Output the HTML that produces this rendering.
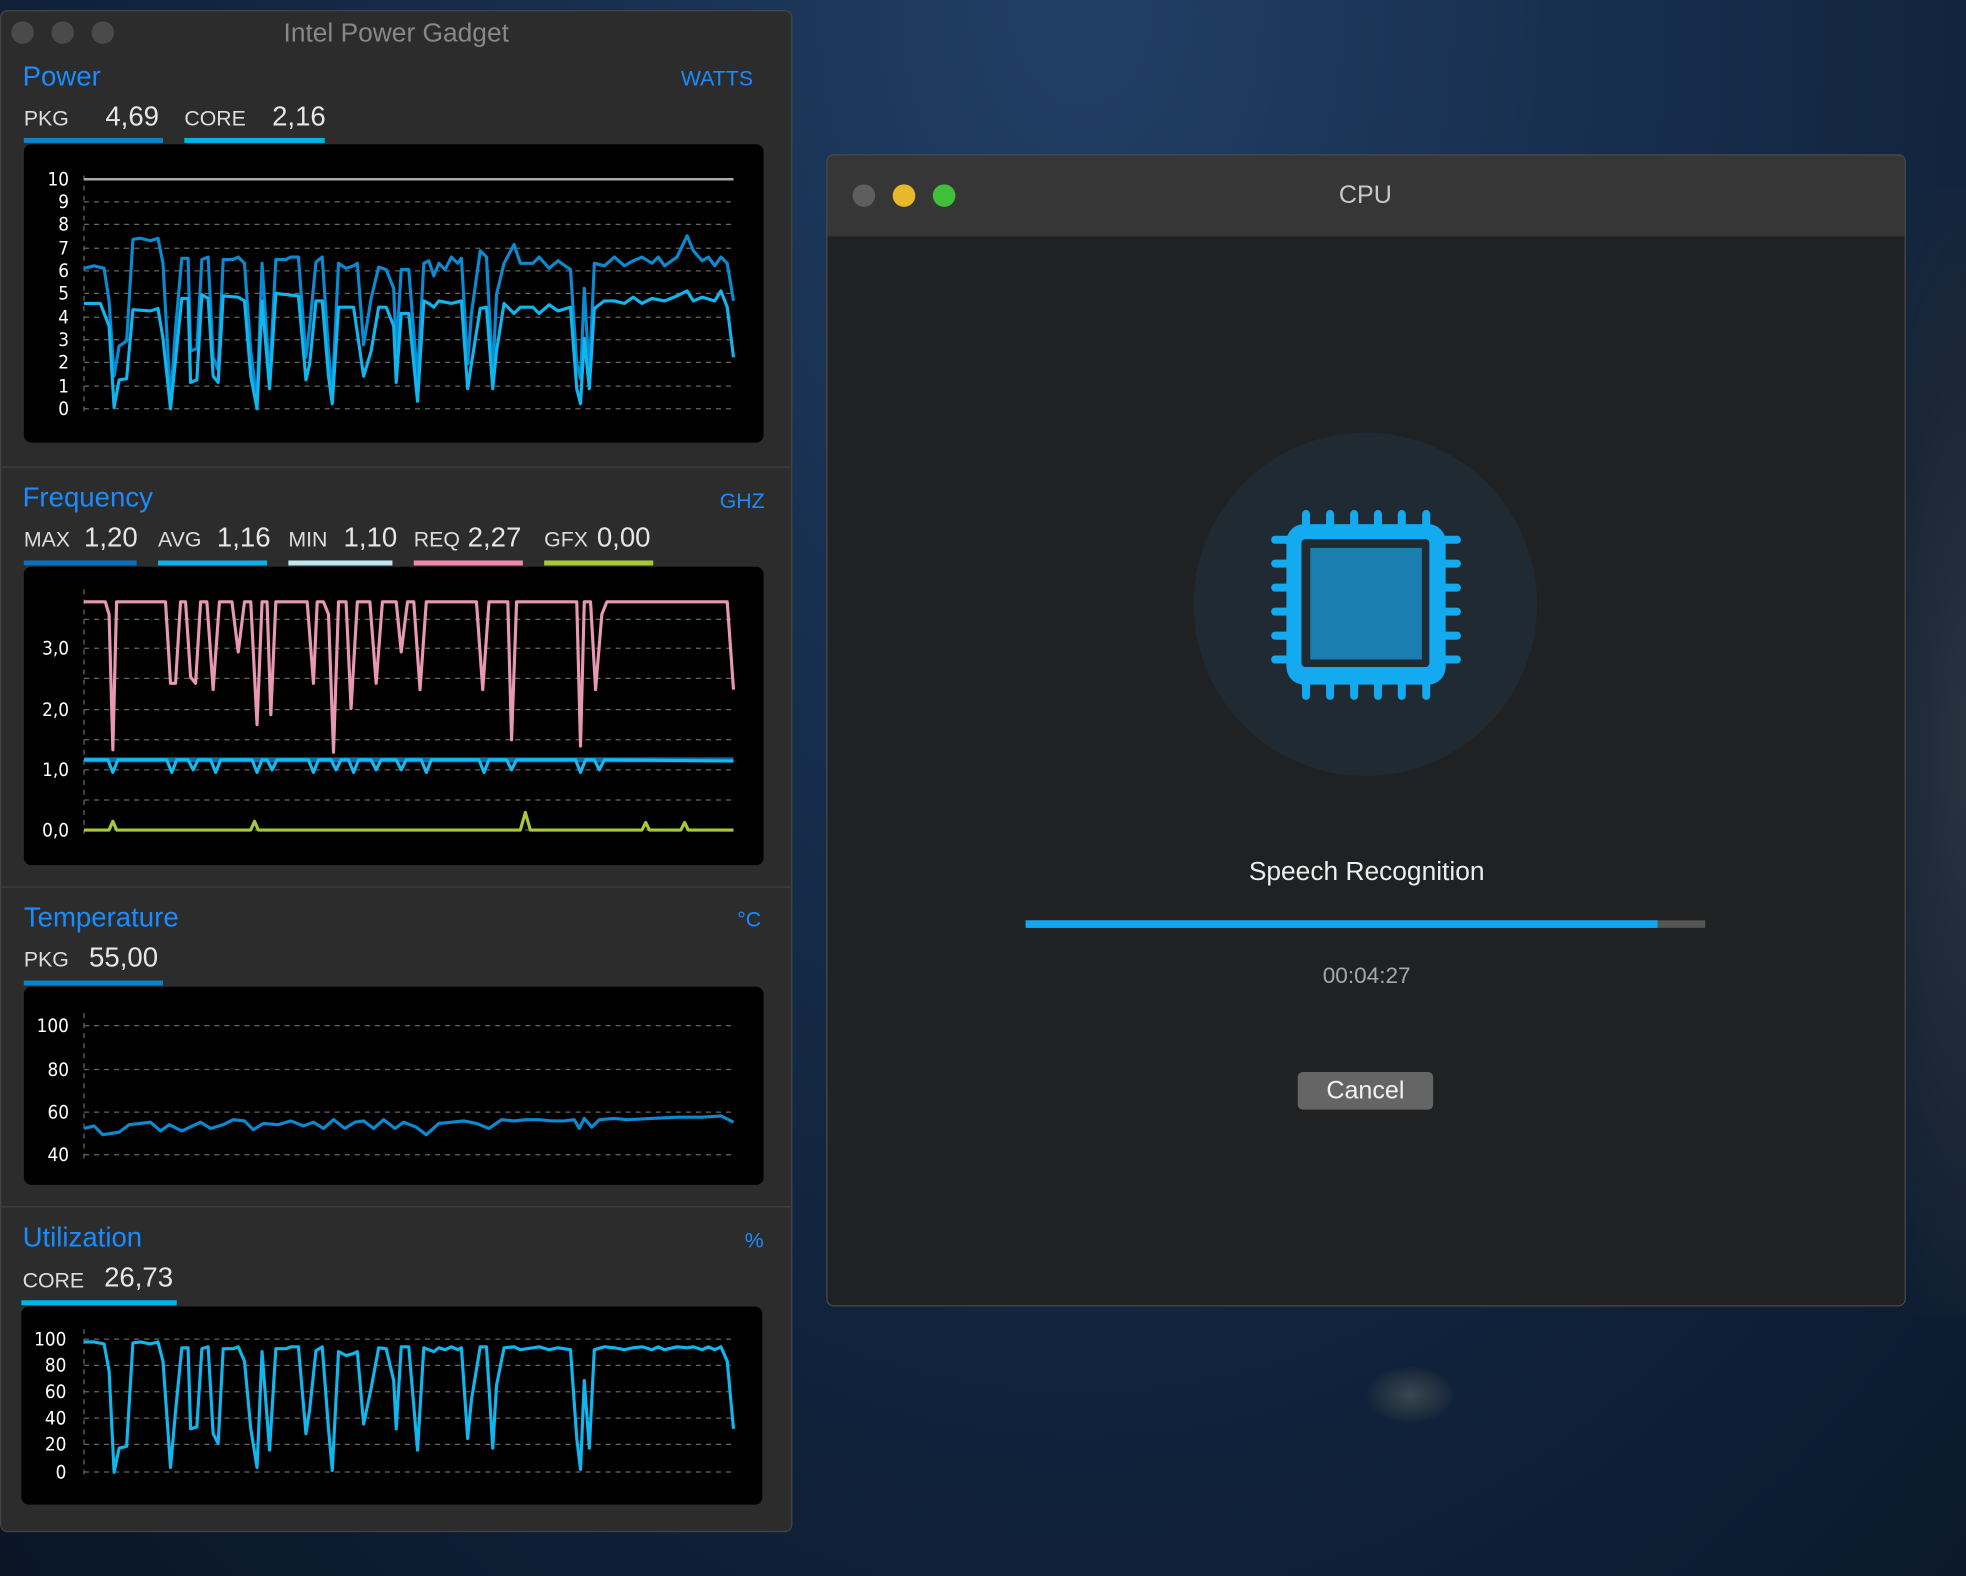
<!DOCTYPE html>
<html><head><meta charset="utf-8"><style>
html,body{margin:0;padding:0;width:1966px;height:1576px;overflow:hidden;background:#0c1a2c}
#s{position:absolute;left:0;top:0;width:1568px;height:1257px;transform:scale(1.25383);transform-origin:0 0;font-family:"Liberation Sans",sans-serif;
background:radial-gradient(ellipse at 55% 0%,#213f66 0%,#172e4d 35%,#0f2038 70%,#0a1626 100%)}
.a{position:absolute}
.win{position:absolute;left:0;top:8px;width:632px;height:1214px;background:#2c2c2c;border-radius:6px;border:1px solid #444;box-sizing:border-box}
.h{color:#1a8cff;font-size:22px}
.u{color:#1a8cff;font-size:17px}
.l{color:#ddd;font-size:17px}
.v{color:#e6e6e6;font-size:22px}
.bar{position:absolute;height:4px}
.box{position:absolute;background:#000;border-radius:6px}
.sep{position:absolute;left:0;width:632px;height:1px;background:#3e3e3e}
</style></head><body><div id="s">
<div class="a" style="left:1480px;top:150px;width:88px;height:900px;background:radial-gradient(ellipse at 100% 50%,#27333f 0%,#1a2636 50%,transparent 80%)"></div>
<div class="a" style="left:1090px;top:1090px;width:70px;height:45px;border-radius:50%;background:radial-gradient(#3b4650,#1a2a3c 60%,transparent 72%)"></div>

<div class="win">
 <div class="a" style="left:8px;top:8px;width:18px;height:18px;border-radius:50%;background:#4a4a4a"></div>
 <div class="a" style="left:40px;top:8px;width:18px;height:18px;border-radius:50%;background:#4a4a4a"></div>
 <div class="a" style="left:72px;top:8px;width:18px;height:18px;border-radius:50%;background:#4a4a4a"></div>
 <div class="a" style="left:0;width:630px;top:6px;text-align:center;color:#888;font-size:21px">Intel Power Gadget</div>
</div>
<div class="sep" style="top:372px"></div><div class="sep" style="top:707px"></div><div class="sep" style="top:962px"></div>

<div class="a h" style="left:18px;top:48px">Power</div>
<div class="a u" style="left:543px;top:53px">WATTS</div>
<div class="a l" style="left:19px;top:85px">PKG</div><div class="a v" style="left:84px;top:80px">4,69</div>
<div class="a l" style="left:147px;top:85px">CORE</div><div class="a v" style="left:217px;top:80px">2,16</div>
<div class="bar" style="left:19px;top:110px;width:111px;background:#0a84c8"></div>
<div class="bar" style="left:147px;top:110px;width:112px;background:#00b4e6"></div>
<div class="box" style="left:19px;top:115px;width:590px;height:238px"></div>

<div class="a h" style="left:18px;top:384px">Frequency</div>
<div class="a u" style="left:574px;top:390px">GHZ</div>
<div class="a l" style="left:19px;top:421px">MAX</div><div class="a v" style="left:67px;top:416px">1,20</div>
<div class="a l" style="left:126px;top:421px">AVG</div><div class="a v" style="left:173px;top:416px">1,16</div>
<div class="a l" style="left:230px;top:421px">MIN</div><div class="a v" style="left:274px;top:416px">1,10</div>
<div class="a l" style="left:330px;top:421px">REQ</div><div class="a v" style="left:373px;top:416px">2,27</div>
<div class="a l" style="left:434px;top:421px">GFX</div><div class="a v" style="left:476px;top:416px">0,00</div>
<div class="bar" style="left:19px;top:447px;width:90px;background:#0a6fc0"></div>
<div class="bar" style="left:126px;top:447px;width:87px;background:#12b0e8"></div>
<div class="bar" style="left:230px;top:447px;width:83px;background:#c0e6f2"></div>
<div class="bar" style="left:330px;top:447px;width:87px;background:#f08aa8"></div>
<div class="bar" style="left:434px;top:447px;width:87px;background:#a8c83a"></div>
<div class="box" style="left:19px;top:452px;width:590px;height:238px"></div>

<div class="a h" style="left:19px;top:719px">Temperature</div>
<div class="a u" style="left:588px;top:724px">°C</div>
<div class="a l" style="left:19px;top:756px">PKG</div><div class="a v" style="left:71px;top:751px">55,00</div>
<div class="bar" style="left:19px;top:782px;width:111px;background:#0a84c8"></div>
<div class="box" style="left:19px;top:787px;width:590px;height:158px"></div>

<div class="a h" style="left:18px;top:974px">Utilization</div>
<div class="a u" style="left:594px;top:980px">%</div>
<div class="a l" style="left:18px;top:1012px">CORE</div><div class="a v" style="left:83px;top:1006px">26,73</div>
<div class="bar" style="left:17px;top:1037px;width:124px;background:#00b4e6"></div>
<div class="box" style="left:17px;top:1042px;width:591px;height:158px"></div>

<svg class="a" style="left:0;top:0" width="632" height="1257" font-family="DejaVu Sans Condensed,DejaVu Sans,sans-serif" font-size="15" fill="#fff">
<g stroke="#666" stroke-dasharray="4 4" stroke-width="1">
<path d="M67 161H585M67 179H585M67 198H585M67 216H585M67 234H585M67 253H585M67 271H585M67 289H585M67 308H585M67 326H585M67 140V330"/>
<path d="M67 494H585M67 517H585M67 541H585M67 566H585M67 590H585M67 614H585M67 638H585M67 662H585M67 470V665"/>
<path d="M67 818H585M67 853H585M67 887H585M67 921H585M67 808V925"/>
<path d="M67 1068H585M67 1089H585M67 1110H585M67 1131H585M67 1152H585M67 1174H585M67 1060V1178"/>
</g>
<path d="M67 143H585" stroke="#aaa" stroke-width="2"/>
<g text-anchor="end">
<text x="55" y="148">10</text><text x="55" y="166">9</text><text x="55" y="184">8</text><text x="55" y="203">7</text><text x="55" y="221">6</text><text x="55" y="239">5</text><text x="55" y="258">4</text><text x="55" y="276">3</text><text x="55" y="294">2</text><text x="55" y="313">1</text><text x="55" y="331">0</text>
<text x="55" y="522">3,0</text><text x="55" y="571">2,0</text><text x="55" y="619">1,0</text><text x="55" y="667">0,0</text>
<text x="55" y="823">100</text><text x="55" y="858">80</text><text x="55" y="892">60</text><text x="55" y="926">40</text>
<text x="53" y="1073">100</text><text x="53" y="1094">80</text><text x="53" y="1115">60</text><text x="53" y="1136">40</text><text x="53" y="1157">20</text><text x="53" y="1179">0</text>
</g>
<g fill="none" stroke-width="2.5" stroke-linejoin="round">
<polyline stroke="#0a8ad0" points="67,214 75,212 83,214 87,240 91,300 95,276 101,272 106,191 112,190 120,192 126,190 130,210 136,320 140,262 145,206 150,206 152,280 157,278 161,207 166,205 170,285 174,295 178,207 186,207 190,205 195,210 200,280 205,320 209,210 215,302 220,207 228,207 232,205 238,205 244,285 247,260 252,209 257,205 262,280 265,313 270,210 276,214 282,212 285,210 290,275 296,238 302,213 308,215 314,230 316,280 320,215 326,215 333,302 338,210 342,208 346,220 350,210 355,215 360,205 365,210 368,206 373,290 376,250 383,200 388,205 393,300 396,235 402,210 410,195 415,210 425,210 430,205 438,214 445,208 455,215 460,290 463,302 466,230 470,300 474,210 482,212 490,205 498,212 505,208 512,205 520,210 525,205 530,212 540,205 548,188 553,200 560,208 565,205 570,212 575,205 580,210 585,240"/>
<polyline stroke="#10b6ee" points="67,242 80,242 87,260 91,325 95,303 101,302 106,247 120,248 126,246 130,270 136,326 145,238 150,238 152,305 157,303 161,235 166,238 170,300 174,305 178,236 190,237 195,240 200,300 205,326 209,240 215,310 220,234 238,236 244,303 247,290 252,240 257,240 262,300 265,322 270,245 282,245 290,300 296,280 302,245 308,245 314,260 316,305 320,250 326,250 333,320 338,240 342,242 346,245 350,240 360,242 368,240 373,310 376,290 383,246 388,245 393,310 396,280 402,242 410,250 415,245 425,245 430,250 438,243 445,248 455,245 460,310 463,322 466,270 470,310 474,246 482,240 490,240 498,242 505,237 512,242 520,238 530,240 540,236 548,232 553,240 560,237 570,240 575,232 580,245 585,285"/>
<polyline stroke="#e898b4" points="67,480 84,480 87,490 90,598 93,480 132,480 136,545 140,545 144,480 148,480 152,540 156,545 160,480 165,480 170,550 175,480 185,480 190,520 195,480 200,480 205,578 209,480 213,480 216,570 220,480 245,480 250,545 253,480 258,480 262,490 266,600 270,480 276,480 280,565 285,480 295,480 300,545 305,480 316,480 320,520 325,480 330,480 335,550 340,480 380,480 385,550 390,480 405,480 408,590 412,480 460,480 463,595 466,480 471,480 475,550 480,490 484,480 580,480 585,550"/>
<polyline stroke="#0a6fa8" stroke-width="4" points="67,606 585,606"/>
<polyline stroke="#18b8f0" points="67,606 86,606 90,616 94,606 133,606 137,616 141,606 150,606 154,614 158,606 168,606 172,616 176,606 201,606 205,616 209,606 213,606 217,614 221,606 246,606 250,616 254,606 264,606 268,614 272,606 278,606 282,616 286,606 296,606 300,614 304,606 316,606 320,614 324,606 336,606 340,616 344,606 382,606 386,616 390,606 404,606 408,614 412,606 459,606 463,616 467,606 474,606 478,614 482,606 585,607"/>
<polyline stroke="#a8c83a" points="67,662 87,662 90,655 93,662 200,662 203,655 206,662 415,662 419,648 423,662 512,662 515,656 518,662 543,662 546,656 549,662 585,662"/>
<polyline stroke="#0a8ad0" points="67,900 75,898 82,905 95,903 103,897 120,895 128,902 135,897 145,902 160,895 168,900 178,897 186,893 195,894 202,901 210,896 222,897 232,894 242,898 250,895 258,900 266,893 275,900 283,895 290,894 298,900 306,893 315,900 322,895 332,899 340,905 350,896 360,895 370,894 380,896 390,900 400,893 410,894 420,893 430,893 440,894 450,894 458,893 462,900 466,892 472,899 478,893 490,892 500,893 520,892 540,891 560,891 575,890 585,895"/>
<polyline stroke="#10b6ee" transform="matrix(1 0 0 0.77 0 924)" vector-effect="non-scaling-stroke" points="67,190 75,190 83,192 87,220 91,325 95,300 101,298 106,191 112,190 120,192 126,190 130,210 136,320 140,262 145,196 150,196 152,280 157,278 161,197 166,195 170,285 174,295 178,197 186,197 190,195 195,210 200,280 205,320 209,200 215,302 220,197 228,197 232,195 238,195 244,285 247,260 252,199 257,195 262,280 265,323 270,200 276,204 282,202 285,200 290,275 296,238 302,196 308,197 314,230 316,280 320,195 326,195 333,302 338,196 342,198 346,200 350,196 355,198 360,195 365,198 368,196 373,290 376,250 383,195 388,195 393,300 396,235 402,196 410,195 415,198 425,196 430,195 438,198 445,196 455,198 460,290 463,322 466,230 470,300 474,198 482,195 490,196 498,198 505,196 512,195 520,198 525,195 530,198 540,195 548,196 553,195 560,198 565,195 570,198 575,195 580,210 585,280"/>
</g>
</svg>

<div class="a" style="left:659px;top:123px;width:861px;height:919px;background:#202122;border:1px solid #4a4a4a;box-sizing:border-box;border-radius:6px;overflow:hidden">
 <div style="height:64px;background:#363636;border-bottom:1px solid #2a2a2a"></div>
</div>
<div class="a" style="left:680px;top:147px;width:18px;height:18px;border-radius:50%;background:#5e5e5e"></div>
<div class="a" style="left:712px;top:147px;width:18px;height:18px;border-radius:50%;background:#e8b82c"></div>
<div class="a" style="left:744px;top:147px;width:18px;height:18px;border-radius:50%;background:#3fbf3a"></div>
<div class="a" style="left:1040px;top:145px;width:98px;text-align:center;color:#c8c8c8;font-size:20px">CPU</div>
<svg class="a" style="left:950px;top:344px" width="280" height="280">
 <circle cx="139" cy="138" r="137" fill="#1f2a33"/>
 <g transform="translate(-950,-344)">
 <g stroke="#14aaf0" stroke-width="6.4" stroke-linecap="round">
 <path d="M1041.6 410V420M1060.8 410V420M1080 410V420M1099 410V420M1118 410V420M1137.5 410V420M1041.6 545V555M1060.8 545V555M1080 545V555M1099 545V555M1118 545V555M1137.5 545V555"/>
 <path d="M1017 430.5H1028M1017 449.5H1028M1017 468.7H1028M1017 487.8H1028M1017 507H1028M1017 526H1028M1151 430.5H1162M1151 449.5H1162M1151 468.7H1162M1151 487.8H1162M1151 507H1162M1151 526H1162"/>
 </g>
 <rect x="1026" y="418" width="127" height="128" rx="14" fill="#14aaf0"/>
 <rect x="1038" y="430" width="102" height="102" rx="3" fill="#1f2a33"/>
 <rect x="1045" y="437" width="89" height="89" fill="#1a7fb0"/>
 </g>
</svg>
<div class="a" style="left:890px;top:684px;width:400px;text-align:center;color:#eee;font-size:21px">Speech Recognition</div>
<div class="a" style="left:818px;top:734px;width:542px;height:6px;background:#555"></div>
<div class="a" style="left:818px;top:734px;width:504px;height:6px;background:#12a8f0"></div>
<div class="a" style="left:990px;top:768px;width:200px;text-align:center;color:#a8a8a8;font-size:18px">00:04:27</div>
<div class="a" style="left:1035px;top:855px;width:108px;height:30px;background:#656565;border-radius:4px;color:#f2f2f2;font-size:20px;text-align:center;line-height:31px">Cancel</div>
</div></body></html>
